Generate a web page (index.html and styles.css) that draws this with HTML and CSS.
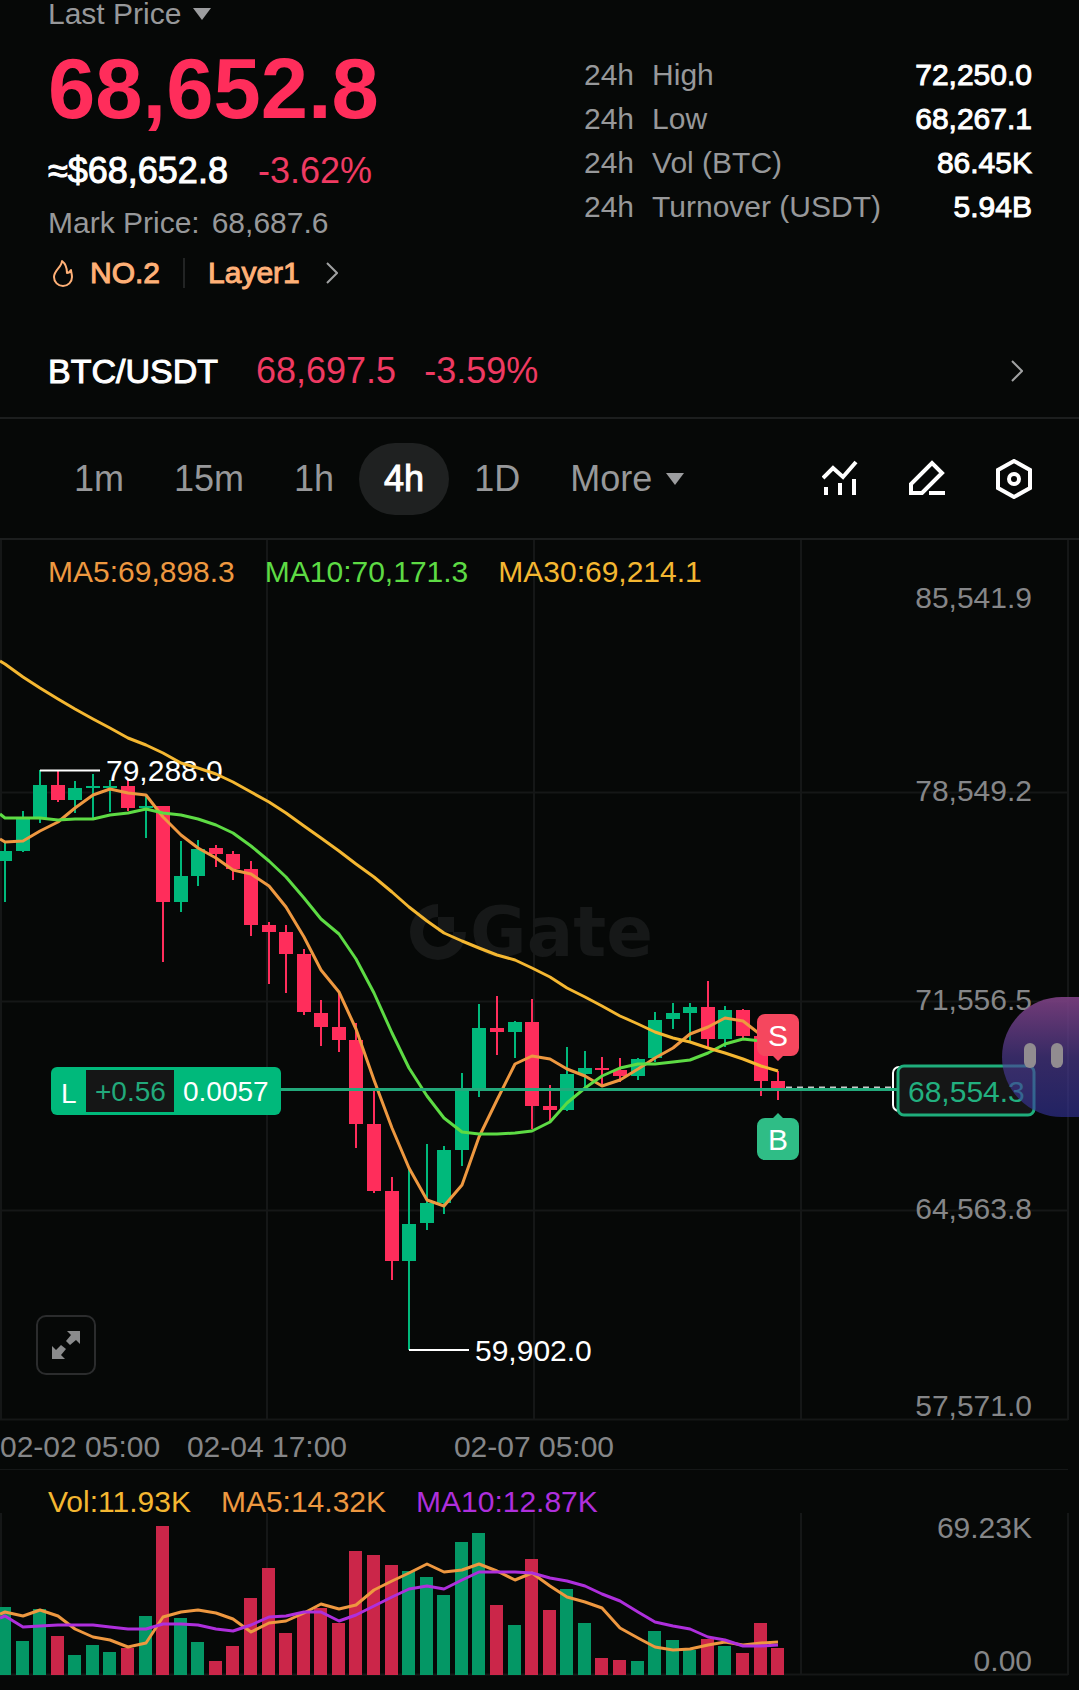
FILE: index.html
```html
<!DOCTYPE html>
<html lang="en">
<head>
<meta charset="utf-8">
<meta name="viewport" content="width=device-width, initial-scale=1">
<title>BTC/USDT</title>
<link rel="stylesheet" href="styles.css">
</head>
<body>
<header class="summary">
  <div class="quote">
    <button class="price-type" type="button">Last Price
      <svg class="caret" width="18" height="12" viewBox="0 0 18 12" aria-hidden="true"><path d="M0 0h18l-9 12z"/></svg>
    </button>
    <div class="last-price">68,652.8</div>
    <div class="fiat-row"><span class="medium">≈$68,652.8</span><span class="down">-3.62%</span></div>
    <div class="mark-row"><span>Mark Price:</span><span>68,687.6</span></div>
    <a class="tags" href="#tags">
      <svg class="flame" width="26" height="30" viewBox="0 0 26 30" aria-hidden="true"><path d="M12 3C12 9 4 12 4 19a9 9 0 0 0 18 0c0-3-1-5-1-7-1 2-2 3-4 3 0-4-1-9-5-12z"/></svg>
      <span class="medium rank">NO.2</span>
      <span class="divider"></span>
      <span class="medium">Layer1</span>
      <svg class="chevron" width="12" height="22" viewBox="0 0 12 22" aria-hidden="true"><path d="M1 1l10 10L1 21"/></svg>
    </a>
  </div>
  <dl class="stats">
    <div class="stat"><dt><span>24h</span><span>High</span></dt><dd>72,250.0</dd></div>
    <div class="stat"><dt><span>24h</span><span>Low</span></dt><dd>68,267.1</dd></div>
    <div class="stat"><dt><span>24h</span><span>Vol (BTC)</span></dt><dd>86.45K</dd></div>
    <div class="stat"><dt><span>24h</span><span>Turnover (USDT)</span></dt><dd>5.94B</dd></div>
  </dl>
</header>

<a class="spot" href="#spot">
  <span class="medium pair">BTC/USDT</span>
  <span class="down spot-price">68,697.5</span>
  <span class="down">-3.59%</span>
  <svg class="chevron end" width="12" height="22" viewBox="0 0 12 22" aria-hidden="true"><path d="M1 1l10 10L1 21"/></svg>
</a>

<div class="toolbar">
  <nav class="intervals" aria-label="Interval">
    <button type="button">1m</button>
    <button type="button">15m</button>
    <button type="button">1h</button>
    <button type="button" class="active" aria-pressed="true">4h</button>
    <button type="button">1D</button>
    <button type="button" class="more">More
      <svg class="caret" width="18" height="12" viewBox="0 0 18 12" aria-hidden="true"><path d="M0 0h18l-9 12z"/></svg>
    </button>
  </nav>
  <div class="tools">
    <button type="button" aria-label="Indicators"><svg width="36" height="40" viewBox="0 0 36 40"><path d="M1 19l10-10 10 9L34 3M4 28v8M18 24v12M32 20v16"/></svg></button>
    <button type="button" aria-label="Draw"><svg width="36" height="40" viewBox="0 0 36 40"><path d="M2 34V25L23 4l10 10L13 34zM20 34h16"/></svg></button>
    <button type="button" aria-label="Chart settings"><svg width="36" height="40" viewBox="0 0 36 40"><path d="M18 2l16 9v18l-16 9-16-9V11z"/><circle cx="18" cy="20" r="5"/></svg></button>
  </div>
</div>

<main>
  <section class="panel price-panel" aria-label="Price chart">
    <div class="legend"><span class="c-ma5">MA5:69,898.3</span><span class="c-ma10">MA10:70,171.3</span><span class="c-ma30">MA30:69,214.1</span></div>
    <svg class="plot" viewBox="0 540 1079 930">
      <path class="grid" d="M0 792.5H1068M0 1001.5H1068M0 1210.5H1068M0 1419.5H1068M1 540V1420M267 540V1420M534 540V1420M801 540V1420M1068 540V1420"/>
      <path class="grid" d="M0 1470H1068"/>
      <g class="watermark">
        <path d="M438 904V917A15 15 0 1 0 453 932H466A28 28 0 1 1 438 904z"/>
        <path d="M438 917h16v15h-16z"/>
        <text x="470" y="956">Gate</text>
      </g>
      <g id="candles"></g>
      <g class="extreme">
        <path d="M40 770.5H100M409 1350H469"/>
        <text x="106" y="781">79,288.0</text>
        <text x="475" y="1361">59,902.0</text>
      </g>
      <g id="averages"></g>
      <g class="axis">
        <text x="1032" y="608">85,541.9</text>
        <text x="1032" y="801">78,549.2</text>
        <text x="1032" y="1010">71,556.5</text>
        <text x="1032" y="1219">64,563.8</text>
        <text x="1032" y="1416">57,571.0</text>
      </g>
      <g class="axis dates">
        <text class="first" x="0" y="1457">02-02 05:00</text>
        <text x="267" y="1457">02-04 17:00</text>
        <text x="534" y="1457">02-07 05:00</text>
      </g>
      <path class="current" d="M786 1087.5H893"/>
      <rect class="current-box" x="893" y="1067" width="130" height="44" rx="6"/>
      <path class="position-line" d="M281 1089.5H898"/>
      <rect class="entry-box" x="898" y="1066" width="136" height="49" rx="6"/>
      <text class="entry-price" x="908" y="1102">68,554.3</text>
      <rect class="tag" x="51" y="1067" width="230" height="48" rx="6"/>
      <rect class="tag-pnl" x="86" y="1070" width="88" height="42"/>
      <text class="tag-text" x="61" y="1103">L</text>
      <text class="tag-text gain" x="95" y="1101">+0.56</text>
      <text class="tag-text" x="183" y="1101">0.0057</text>
      <g class="trade">
        <path class="sell" d="M765 1014h26a8 8 0 0 1 8 8v26a8 8 0 0 1-8 8h-8l-5 5-5-5h-8a8 8 0 0 1-8-8v-26a8 8 0 0 1 8-8z"/>
        <text x="778" y="1046">S</text>
        <path class="buy" d="M765 1118h8l5-5 5 5h8a8 8 0 0 1 8 8v26a8 8 0 0 1-8 8h-26a8 8 0 0 1-8-8v-26a8 8 0 0 1 8-8z"/>
        <text x="778" y="1150">B</text>
      </g>
    </svg>
    <button class="fullscreen" type="button" aria-label="Full screen"><svg width="28" height="28" viewBox="0 0 28 28"><path d="M15 0h13v13l-4-4-6 5-4-4 5-6zM0 28V15l4 4 5-5 5 4-5 6 4 4z"/></svg></button>
    <button class="assistant" type="button" aria-label="Assistant"><span class="eye"></span><span class="eye"></span></button>
  </section>

  <section class="panel volume-panel" aria-label="Volume chart">
    <div class="legend"><span class="c-ma30">Vol:11.93K</span><span class="c-ma5">MA5:14.32K</span><span class="c-vol10">MA10:12.87K</span></div>
    <svg class="plot" viewBox="0 1470 1079 220">
      <path class="grid" d="M0 1674.5H1068M1 1513V1675M267 1513V1675M534 1513V1675M801 1513V1675M1068 1513V1675"/>
      <g id="volumes"></g>
      <g class="axis">
        <text x="1032" y="1538">69.23K</text>
        <text x="1032" y="1671">0.00</text>
      </g>
    </svg>
  </section>
</main>
<script src="chart.js"></script>
</body>
</html>
```
FILE: styles.css
```css
* { box-sizing: border-box; }

body {
  margin: 0;
  background: #060807;
  color: #fff;
  font-family: "Liberation Sans", Arial, sans-serif;
  font-size: 30px;
}

button {
  padding: 0;
  border: 0;
  background: none;
  color: inherit;
  font: inherit;
  cursor: pointer;
}

a { color: inherit; text-decoration: none; }

svg { display: block; }

.medium { -webkit-text-stroke: 1px currentColor; }
.down { color: #ef3a62; }
.caret { fill: #9c9d9f; }
.chevron { fill: none; stroke: #a0a1a2; stroke-width: 2; }

/* Price summary */
.summary {
  display: flex;
  justify-content: space-between;
  padding: 0 47px 0 48px;
}

.quote {
  display: flex;
  flex-direction: column;
  align-items: flex-start;
  gap: 15px;
  color: #97989a;
}

.price-type {
  display: flex;
  align-items: center;
  gap: 12px;
  line-height: 28px;
}

.last-price {
  color: #ff2d5b;
  font-size: 85px;
  font-weight: 700;
  line-height: 92px;
}

.fiat-row {
  display: flex;
  gap: 30px;
  color: #fff;
  font-size: 36px;
  line-height: 42px;
}

.mark-row { display: flex; gap: 12px; line-height: 32px; }

.tags {
  display: flex;
  align-items: center;
  color: #ffb077;
  line-height: 38px;
}

.flame { margin: 0 14px 0 2px; fill: none; stroke: #ffb077; stroke-width: 2; stroke-linejoin: round; }
.divider { width: 2px; height: 30px; margin: 0 23px; background: #222424; }
.tags .chevron { margin-left: 26px; }

.stats {
  flex: 0 1 448px;
  margin: 0;
  padding-top: 53px;
  line-height: 44px;
}

.stat { display: flex; justify-content: space-between; }
.stat dt { display: flex; gap: 18px; color: #97989a; }
.stat dd { margin: 0; -webkit-text-stroke: 1px #fff; }

/* Spot pair link */
.spot {
  display: flex;
  align-items: center;
  margin-top: 33px;
  padding: 0 56px 0 48px;
  border-bottom: 2px solid #1c1e1e;
  font-size: 36px;
  line-height: 92px;
}

.pair { margin-right: 38px; font-size: 34px; }
.spot-price { margin-right: 28px; }
.end { margin-left: auto; }

/* Interval toolbar */
.toolbar {
  display: flex;
  align-items: center;
  justify-content: space-between;
  padding: 24px 47px 23px 49px;
  border-bottom: 2px solid #1c1e1e;
}

.intervals { display: flex; color: #97989a; font-size: 36px; }
.intervals button { height: 72px; padding: 0 25px; border-radius: 36px; }
.intervals .active { background: #1f2121; color: #fff; -webkit-text-stroke: 1px #fff; }
.intervals .more { display: flex; align-items: center; gap: 14px; }

.tools { display: flex; gap: 51px; }
.tools svg { fill: none; stroke: #fff; stroke-width: 4; }

/* Chart panels */
.panel { position: relative; }
.plot { width: 100%; height: auto; font-size: 30px; }

.legend {
  position: absolute;
  top: 14px;
  left: 48px;
  display: flex;
  gap: 30px;
  line-height: 36px;
}

.c-ma5 { color: #ee9840; }
.c-ma10 { color: #5ddb44; }
.c-ma30 { color: #f4b731; }
.c-vol10 { color: #ae2fdc; }

.grid { fill: none; stroke: #151717; stroke-width: 2; }
.watermark { fill: #161818; }
.watermark text { font-family: "DejaVu Sans", sans-serif; font-size: 69px; font-weight: 700; }

.up-bar { fill: #00b97b; }
.down-bar { fill: #ff2d5b; }
.volume .up-bar { fill: #049765; }
.volume .down-bar { fill: #cb2649; }

.line { fill: none; stroke-width: 3; stroke-linejoin: round; }
.line.ma5 { stroke: #ee9840; }
.line.ma10 { stroke: #5ddb44; }
.line.ma30 { stroke: #f4b731; }
.line.vol10 { stroke: #ae2fdc; }

.extreme { fill: #fff; }
.extreme path { stroke: #fff; stroke-width: 2; }

.axis { fill: #858688; text-anchor: end; }
.dates { text-anchor: middle; }
.dates .first { text-anchor: start; }

.current { stroke: #c9c9c9; stroke-width: 2; stroke-dasharray: 6 5; }
.current-box { fill: #060807; stroke: #fff; stroke-width: 2; }
.position-line { stroke: #22a97b; stroke-width: 3; }
.entry-box { fill: #151616; stroke: #1fae7c; stroke-width: 3; }
.entry-price { fill: #22b07f; }
.tag { fill: #00b97b; }
.tag-pnl { fill: #151616; }
.tag-text { fill: #fff; font-size: 28px; }
.tag-text.gain { fill: #22a97b; }

.trade { fill: #fff; text-anchor: middle; }
.trade .sell { fill: #f5475e; }
.trade .buy { fill: #2fbd86; }

.fullscreen {
  position: absolute;
  top: 775px;
  left: 36px;
  display: grid;
  place-items: center;
  width: 60px;
  height: 60px;
  border: 2px solid #2b2c2d;
  border-radius: 10px;
  background: #060807;
}

.fullscreen svg { fill: #8a8b8c; }

.assistant {
  position: absolute;
  top: 457px;
  right: 0;
  display: flex;
  align-items: center;
  gap: 15px;
  width: 77px;
  height: 120px;
  padding-left: 22px;
  border-radius: 60px 0 0 60px;
  background: linear-gradient(rgba(126, 65, 132, 0.9), rgba(80, 60, 150, 0.65) 50%, rgba(52, 52, 160, 0.6));
}

.eye { width: 12px; height: 25px; margin-top: -4px; border-radius: 6px; background: #918c90; }
```
FILE: chart.js
```js
const STEP = 17.57;
const START = 5;
const centre = (i) => Math.round(START + i * STEP);

// One row per candle: direction, high, body top, body bottom, low
const candles = [
  "u 842 851 861 902", "u 811 819 851 852", "u 770 785 818 823", "d 771 785 800 802",
  "u 781 788 800 813", "u 774 786 788 819", "u 780 786 788 812", "d 780 786 808 811",
  "u 795 806 808 838", "d 806 806 902 962", "u 841 876 902 912", "u 840 849 876 886",
  "d 845 848 854 867", "d 851 854 869 880", "d 861 869 925 936", "d 922 925 932 984",
  "d 925 932 954 993", "d 949 954 1012 1015", "d 1000 1013 1027 1046", "d 991 1027 1040 1052",
  "d 1023 1040 1124 1148", "d 1091 1124 1191 1193", "d 1177 1191 1261 1280", "u 1168 1224 1261 1350",
  "u 1144 1203 1223 1230", "u 1146 1150 1203 1214", "u 1073 1089 1150 1166", "u 1004 1028 1089 1097",
  "d 996 1028 1032 1055", "u 1021 1022 1032 1058", "d 999 1022 1106 1129", "d 1085 1106 1110 1122",
  "u 1047 1074 1110 1111", "u 1051 1068 1074 1091", "d 1057 1068 1070 1085", "d 1058 1070 1076 1082",
  "u 1058 1059 1076 1080", "u 1012 1020 1058 1062", "u 1003 1013 1019 1029", "u 1003 1007 1013 1041",
  "d 981 1007 1039 1047", "u 1006 1010 1039 1047", "d 1009 1010 1036 1039", "d 1036 1036 1081 1096",
  "d 1071 1081 1088 1100",
];

const ma5 = [842, 841, 831, 822, 808, 795, 789, 793, 795, 817, 835, 848, 858, 870, 874, 886, 907, 937, 970, 992, 1029, 1080, 1128, 1168, 1200, 1206, 1185, 1137, 1100, 1064, 1056, 1059, 1069, 1076, 1086, 1080, 1069, 1058, 1048, 1034, 1027, 1018, 1021, 1035];
const ma10 = [818, 818, 818, 820, 819, 819, 815, 813, 809, 813, 815, 819, 825, 833, 846, 861, 877, 898, 919, 934, 959, 993, 1033, 1068, 1096, 1118, 1132, 1134, 1134, 1133, 1131, 1122, 1103, 1088, 1076, 1068, 1064, 1064, 1062, 1060, 1053, 1044, 1039, 1041];
const ma30 = [664, 677, 688, 699, 709, 719, 728, 738, 745, 753, 763, 768, 774, 782, 792, 802, 813, 826, 838, 851, 864, 877, 892, 907, 921, 933, 941, 948, 955, 960, 968, 977, 988, 997, 1006, 1016, 1024, 1032, 1038, 1042, 1048, 1053, 1059, 1066, 1071];

const volumes = [1607, 1641, 1609, 1636, 1655, 1645, 1652, 1648, 1616, 1526, 1618, 1642, 1661, 1646, 1598, 1568, 1633, 1613, 1608, 1623, 1551, 1555, 1565, 1571, 1577, 1595, 1542, 1533, 1605, 1625, 1559, 1610, 1589, 1623, 1658, 1660, 1661, 1631, 1640, 1650, 1639, 1646, 1653, 1623, 1648];
const volMa5 = [1612, 1616, 1610, 1616, 1629, 1637, 1640, 1647, 1643, 1617, 1612, 1610, 1613, 1619, 1632, 1623, 1621, 1613, 1604, 1609, 1605, 1590, 1581, 1573, 1564, 1572, 1570, 1564, 1571, 1580, 1573, 1586, 1597, 1602, 1608, 1628, 1638, 1647, 1650, 1649, 1645, 1642, 1645, 1643, 1642];
const volMa10 = [1616, 1627, 1626, 1625, 1625, 1625, 1627, 1629, 1629, 1624, 1624, 1625, 1629, 1631, 1625, 1617, 1616, 1612, 1612, 1621, 1615, 1606, 1597, 1589, 1586, 1589, 1580, 1572, 1572, 1572, 1573, 1578, 1581, 1586, 1594, 1601, 1612, 1622, 1626, 1629, 1637, 1640, 1646, 1646, 1645];

const VOLUME_BASE = 1675;

const rect = (cls, x, y, w, h) => `<rect class="${cls}" x="${x}" y="${y}" width="${w}" height="${h}"/>`;

// The line enters from the left edge at y = first, then follows the candle centres
const line = (cls, first, values) =>
  `<polyline class="line ${cls}" points="0,${first} ${values.map((y, i) => `${centre(i)},${y}`).join(" ")}"/>`;

const rows = candles.map((row) => {
  const [dir, ...ys] = row.split(" ");
  return { cls: dir === "u" ? "up-bar" : "down-bar", ys: ys.map(Number) };
});

document.getElementById("candles").innerHTML = rows.map(({ cls, ys: [high, top, bottom, low] }, i) =>
  rect(cls, centre(i) - 1, high, 2, low - high) + rect(cls, centre(i) - 7, top, 14, bottom - top)
).join("");

document.getElementById("averages").innerHTML =
  line("ma5", 839, ma5) + line("ma10", 814, ma10) + line("ma30", 661, ma30);

const volumeGroup = document.getElementById("volumes");
volumeGroup.classList.add("volume");
volumeGroup.innerHTML = volumes.map((y, i) =>
  rect(rows[i].cls, centre(i) - 7, y, 13, VOLUME_BASE - y)
).join("") + line("ma5", 1614, volMa5) + line("vol10", 1618, volMa10);
```
